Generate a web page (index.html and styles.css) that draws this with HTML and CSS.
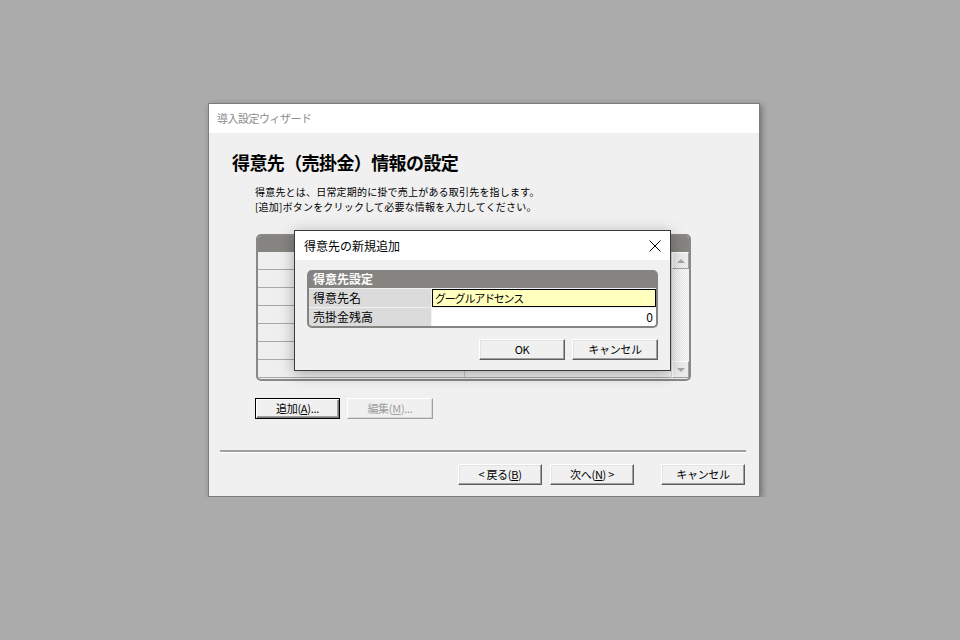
FILE: index.html
```html
<!DOCTYPE html>
<html>
	<head>
		<title>導入設定ウィザード</title>
		<link rel="stylesheet" href="styles.css">
	</head>
	<body>
		<div class="wizard">
			<div class="wizard-title">導入設定ウィザード</div>
			<div class="wizard-body">
				<h1>得意先（売掛金）情報の設定</h1>
				<p class="desc">得意先とは、日常定期的に掛で売上がある取引先を指します。<br />[追加]ボタンをクリックして必要な情報を入力してください。</p>
				<div class="grid-box">
					<div class="grid-head"></div>
					<div class="grid-main">
						<div class="grid-rows">
							<div class="grid-row"><span></span><span></span></div>
							<div class="grid-row"><span></span><span></span></div>
							<div class="grid-row"><span></span><span></span></div>
							<div class="grid-row"><span></span><span></span></div>
							<div class="grid-row"><span></span><span></span></div>
							<div class="grid-row"><span></span><span></span></div>
							<div class="grid-row"><span></span><span></span></div>
						</div>
						<div class="vscroll">
							<div class="sb-btn"><i class="arrow-up"></i></div>
							<div class="sb-track"></div>
							<div class="sb-btn"><i class="arrow-down"></i></div>
						</div>
					</div>
				</div>
				<div class="list-buttons">
					<button type="button" class="btn btn-focus">追加(<u>A</u>)...</button>
					<button type="button" class="btn" disabled>編集(<u>M</u>)...</button>
				</div>
				<div class="separator"></div>
				<div class="nav-buttons">
					<button type="button" class="btn">&lt; 戻る(<u>B</u>)</button>
					<button type="button" class="btn">次へ(<u>N</u>) &gt;</button>
					<button type="button" class="btn btn-cancel">キャンセル</button>
				</div>
			</div>
		</div>

		<!-- Modal dialog over the wizard -->
		<div class="dialog">
			<div class="dialog-title">
				<span>得意先の新規追加</span>
				<svg class="close" width="12" height="12" viewBox="0 0 12 12">
					<path d="M0.5 0.5 L11.5 11.5 M11.5 0.5 L0.5 11.5" stroke="#000" stroke-width="1" fill="none" />
				</svg>
			</div>
			<div class="dialog-body">
				<div class="group">
					<div class="group-head">得意先設定</div>
					<div class="group-row">
						<div class="label">得意先名</div>
						<div class="field field-edit">グーグルアドセンス</div>
					</div>
					<div class="group-row">
						<div class="label">売掛金残高</div>
						<div class="field field-num">0</div>
					</div>
				</div>
				<div class="dialog-buttons">
					<button type="button" class="btn">OK</button>
					<button type="button" class="btn">キャンセル</button>
				</div>
			</div>
		</div>
	</body>
</html>
```

FILE: styles.css
```css
html,
body {
	margin: 0;
	background-color: #ababab;
	font-family: "Noto Sans CJK JP", "DejaVu Sans", sans-serif;
	font-size: 12px;
	color: #000;
}
.wizard {
	margin: 103px 0 0 208px;
	width: 550px;
	border: 1px solid #7c7c7c;
	background-color: #f0f0f0;
	box-shadow: 2px 2px 6px rgba(0, 0, 0, 0.35);
}
.wizard-title {
	height: 29px;
	line-height: 28px;
	background-color: #fff;
	color: #8c8c8c;
	padding-left: 8px;
	font-size: 11px;
	letter-spacing: -0.5px;
}
.wizard-body {
	padding: 17px 12px 11px 11px;
}
h1 {
	margin: 0 0 11px 12px;
	font-size: 18px;
	line-height: 24px;
	font-weight: 700;
	letter-spacing: -0.6px;
}
.desc {
	margin: 0 0 20px 35px;
	font-size: 10px;
	line-height: 14.5px;
	letter-spacing: 0.2px;
}
.grid-box {
	margin-left: 36px;
	width: 431px;
	height: 143px;
	border: 2px solid #8a8884;
	border-radius: 5px;
	background-color: #efefef;
	overflow: hidden;
}
.grid-head {
	height: 16px;
	background-color: #868480;
}
.grid-main {
	display: flex;
}
.grid-rows {
	flex: 1;
}
.grid-row {
	display: flex;
	height: 17px;
	border-bottom: 1px solid #a7a7a7;
}
.grid-row span:first-child {
	width: 206px;
	border-right: 1px solid #c6c6c6;
}
.vscroll {
	width: 17px;
	display: flex;
	flex-direction: column;
	border-left: 1px solid #d8d8d8;
}
.sb-btn {
	background-color: #ececec;
	border: 1px solid;
	border-color: #fff #a0a0a0 #a0a0a0 #fff;
	box-sizing: border-box;
	height: 17px;
	display: flex;
	align-items: center;
	justify-content: center;
}
.sb-track {
	flex: 1;
	background-color: #f4f4f4;
	background-image: repeating-conic-gradient(#ffffff 0 25%, #e4e4e4 0 50%);
	background-size: 2px 2px;
}
.arrow-up,
.arrow-down {
	width: 0;
	height: 0;
	border-left: 4px solid transparent;
	border-right: 4px solid transparent;
}
.arrow-up {
	border-bottom: 4px solid #a6a6a6;
}
.arrow-down {
	border-top: 4px solid #a6a6a6;
}
.list-buttons {
	display: flex;
	gap: 7px;
	margin: 17px 0 0 35px;
}
.btn {
	font-family: "Noto Sans CJK JP", "DejaVu Sans", sans-serif;
	font-size: 11px;
	height: 21px;
	width: 85px;
	padding: 0;
	line-height: 17px;
	background-color: #f0f0f0;
	color: #000;
	border: 1px solid;
	border-color: #fff #5e5e5e #5e5e5e #fff;
	box-shadow: inset -1px -1px 0 #a0a0a0, inset 1px 1px 0 #e3e3e3;
	letter-spacing: -0.3px;
}
.btn u {
	text-underline-offset: 1px;
}
.btn-focus {
	border-color: #000;
	box-shadow: inset 1px 1px 0 #fff, inset -1px -1px 0 #7a7a7a, inset -2px -2px 0 #a0a0a0;
}
.btn[disabled] {
	color: #a0a0a0;
	width: 86px;
	border-color: #fff #a0a0a0 #a0a0a0 #fff;
	box-shadow: inset -1px -1px 0 #d8d8d8;
}
.separator {
	margin: 31px 0 0 0;
	height: 0;
	border-top: 2px solid #a0a0a0;
	border-bottom: 1px solid #fff;
	width: 526px;
}
.nav-buttons {
	display: flex;
	gap: 8px;
	margin: 11px 0 0 238px;
}
.nav-buttons .btn {
	width: 84px;
}
.nav-buttons .btn-cancel {
	margin-left: 19px;
}

/* dialog */
.dialog {
	position: absolute;
	left: 294px;
	top: 230px;
	width: 375px;
	border: 1px solid #3a3a3a;
	background-color: #f0f0f0;
	box-shadow: 0 3px 14px rgba(0, 0, 0, 0.3);
}
.dialog-title {
	height: 29px;
	background-color: #fff;
	display: flex;
	align-items: center;
	justify-content: space-between;
	padding: 0 9px 0 9px;
	font-size: 12px;
}
.dialog-body {
	padding: 10px 12px 10px 12px;
}
.group {
	width: 347px;
	border: 2px solid #868480;
	border-top: 0;
	border-radius: 5px;
	overflow: hidden;
	background-color: #868480;
}
.group-head {
	height: 18px;
	line-height: 18px;
	padding-left: 4px;
	color: #fff;
	font-weight: 700;
}
.group-row {
	display: flex;
	height: 18px;
	border-top: 1px solid #f0f0f0;
}
.label {
	width: 118px;
	padding-left: 4px;
	background-color: #dcdbdb;
	line-height: 18px;
	border-right: 1px solid #f4f4f4;
}
.field {
	flex: 1;
	background-color: #fff;
	line-height: 18px;
	box-sizing: border-box;
}
.field-edit {
	background-color: #ffffbe;
	border: 1px solid #000;
	line-height: 16px;
	padding-left: 2px;
	letter-spacing: -1.2px;
	font-size: 11px;
}
.field-num {
	text-align: right;
	padding-right: 3px;
}
.dialog-buttons {
	display: flex;
	justify-content: flex-end;
	gap: 7px;
	margin-top: 11px;
}
.dialog-buttons .btn {
	width: 86px;
	height: 21px;
}
```
